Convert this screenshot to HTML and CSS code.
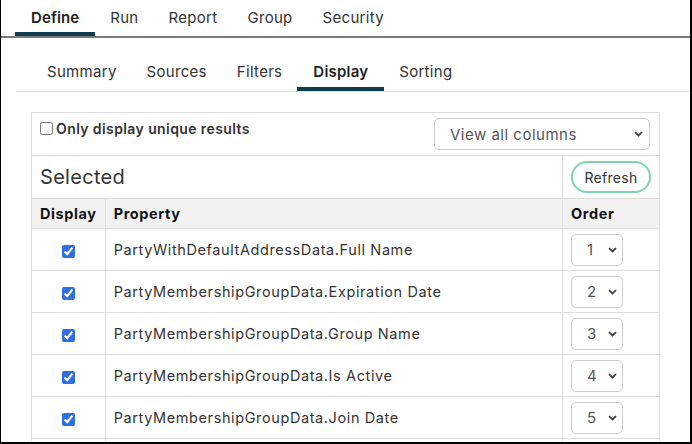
FILE: index.html
```html
<!DOCTYPE html>
<html lang="en">
<head>
  <meta charset="UTF-8">
  <meta name="viewport" content="width=device-width, initial-scale=1.0">
  <title>Query Display</title>
  <link rel="stylesheet" href="styles.css">
</head>
<body>
  <div class="frame">
    <ul class="main-tabs">
      <li class="active">Define</li>
      <li>Run</li>
      <li>Report</li>
      <li>Group</li>
      <li>Security</li>
    </ul>

    <div class="sub-bar">
      <ul class="sub-tabs">
        <li>Summary</li>
        <li>Sources</li>
        <li>Filters</li>
        <li class="active">Display</li>
        <li>Sorting</li>
      </ul>
    </div>

    <table class="display-table">
      <tr class="options-row">
        <td colspan="3">
          <div class="options">
            <label class="unique"><input type="checkbox"> Only display unique results</label>
            <select class="select wide">
              <option>View all columns</option>
            </select>
          </div>
        </td>
      </tr>
      <tr class="selected-row">
        <td colspan="2" class="selected-title">Selected</td>
        <td><button class="refresh">Refresh</button></td>
      </tr>
      <tr class="head-row">
        <th class="col-display">Display</th>
        <th>Property</th>
        <th class="col-order">Order</th>
      </tr>
      <tr>
        <td class="check"><input type="checkbox" checked></td>
        <td>PartyWithDefaultAddressData.Full Name</td>
        <td><select class="select order"><option>1</option></select></td>
      </tr>
      <tr>
        <td class="check"><input type="checkbox" checked></td>
        <td>PartyMembershipGroupData.Expiration Date</td>
        <td><select class="select order"><option>2</option></select></td>
      </tr>
      <tr>
        <td class="check"><input type="checkbox" checked></td>
        <td>PartyMembershipGroupData.Group Name</td>
        <td><select class="select order"><option>3</option></select></td>
      </tr>
      <tr>
        <td class="check"><input type="checkbox" checked></td>
        <td>PartyMembershipGroupData.Is Active</td>
        <td><select class="select order"><option>4</option></select></td>
      </tr>
      <tr>
        <td class="check"><input type="checkbox" checked></td>
        <td>PartyMembershipGroupData.Join Date</td>
        <td><select class="select order"><option>5</option></select></td>
      </tr>
      <tr>
        <td class="check"></td>
        <td></td>
        <td></td>
      </tr>
    </table>
  </div>
</body>
</html>
```

FILE: styles.css
```css
body {
  margin: 0;
  font-family: Inter, "Noto Sans", sans-serif;
  color: #333;
  background: #fff;
}

.frame {
  height: 444px;
  box-sizing: border-box;
  border-left: 1px solid #000;
  border-right: 2px solid #000;
  border-bottom: 2px solid #000;
  overflow: hidden;
}

ul {
  list-style: none;
  margin: 0;
  padding: 0;
}

.main-tabs {
  display: flex;
  padding-left: 14px;
  border-bottom: 2px solid #7a7a7a;
  font-size: 15px;
  letter-spacing: 0.3px;
}

.main-tabs li {
  padding: 0 15px;
  height: 32px;
  line-height: 36px;
  border-bottom: 4px solid transparent;
}

.main-tabs li.active {
  font-weight: 600;
  color: #222;
  padding: 0 16px;
  letter-spacing: 0.1px;
  border-bottom-color: #0f3d4f;
}

.sub-bar {
  margin-left: 15px;
  padding-top: 16px;
  border-bottom: 1px solid #ddd;
}

.sub-tabs {
  display: flex;
  padding-left: 16px;
  font-size: 15px;
  letter-spacing: 0.3px;
}

.sub-tabs li {
  padding: 0 15px;
  height: 33px;
  line-height: 36px;
  border-bottom: 4px solid transparent;
}

.sub-tabs li.active {
  font-weight: 600;
  color: #222;
  padding: 0 16px;
  letter-spacing: 0.2px;
  border-bottom-color: #0f3d4f;
}

.display-table {
  margin: 20px 0 0 30px;
  width: 629px;
  border-collapse: collapse;
  font-size: 14.5px;
  letter-spacing: 0.6px;
}

.display-table td,
.display-table th {
  border: 1px solid #ddd;
  padding: 0 8px;
  text-align: left;
  height: 41px;
}

.options-row td {
  height: 42px;
}

.options {
  display: flex;
  justify-content: space-between;
  align-items: center;
}

.unique {
  font-weight: 600;
  font-size: 14px;
  letter-spacing: 0.4px;
  color: #333;
  display: flex;
  align-items: center;
  gap: 3px;
  margin-bottom: 12px;
}

.unique input {
  margin: 0;
  width: 13px;
  height: 13px;
}

.select {
  appearance: none;
  border: 1px solid #ccc;
  border-radius: 5px;
  background: #fff url("data:image/svg+xml,%3Csvg xmlns='http://www.w3.org/2000/svg' width='9' height='6' viewBox='0 0 9 6'%3E%3Cpath d='M1 1.2l3.5 3.3 3.5-3.3' fill='none' stroke='%23444' stroke-width='1.8'/%3E%3C/svg%3E") no-repeat;
  font-family: inherit;
  letter-spacing: 0.5px;
  color: #555;
  height: 32px;
}

.select.wide {
  width: 216px;
  font-size: 15px;
  padding: 0 15px;
  background-position: right 6px center;
  margin-right: 1px;
}

.select.order {
  width: 52px;
  font-size: 15px;
  padding: 0 0 0 15px;
  background-position: right 5px center;
  display: block;
}

.selected-row td {
  height: 42px;
}

.selected-title {
  font-size: 20px;
  letter-spacing: 0.3px;
  color: #333;
}

.refresh {
  font-family: inherit;
  font-size: 14px;
  letter-spacing: 0.3px;
  color: #333;
  background: #fff;
  border: 2px solid #7fd4b0;
  border-radius: 16px;
  height: 32px;
  width: 80px;
  padding: 0;
  display: block;
}

.head-row th {
  background: #f2f2f2;
  font-weight: 700;
  color: #111;
  height: 29px;
}

.col-display {
  width: 56px;
}

.col-order {
  width: 79px;
}

.check {
  text-align: center !important;
}

.check input {
  margin: 0;
  width: 13px;
  height: 13px;
  vertical-align: middle;
  accent-color: #2f6fe0;
}
```
